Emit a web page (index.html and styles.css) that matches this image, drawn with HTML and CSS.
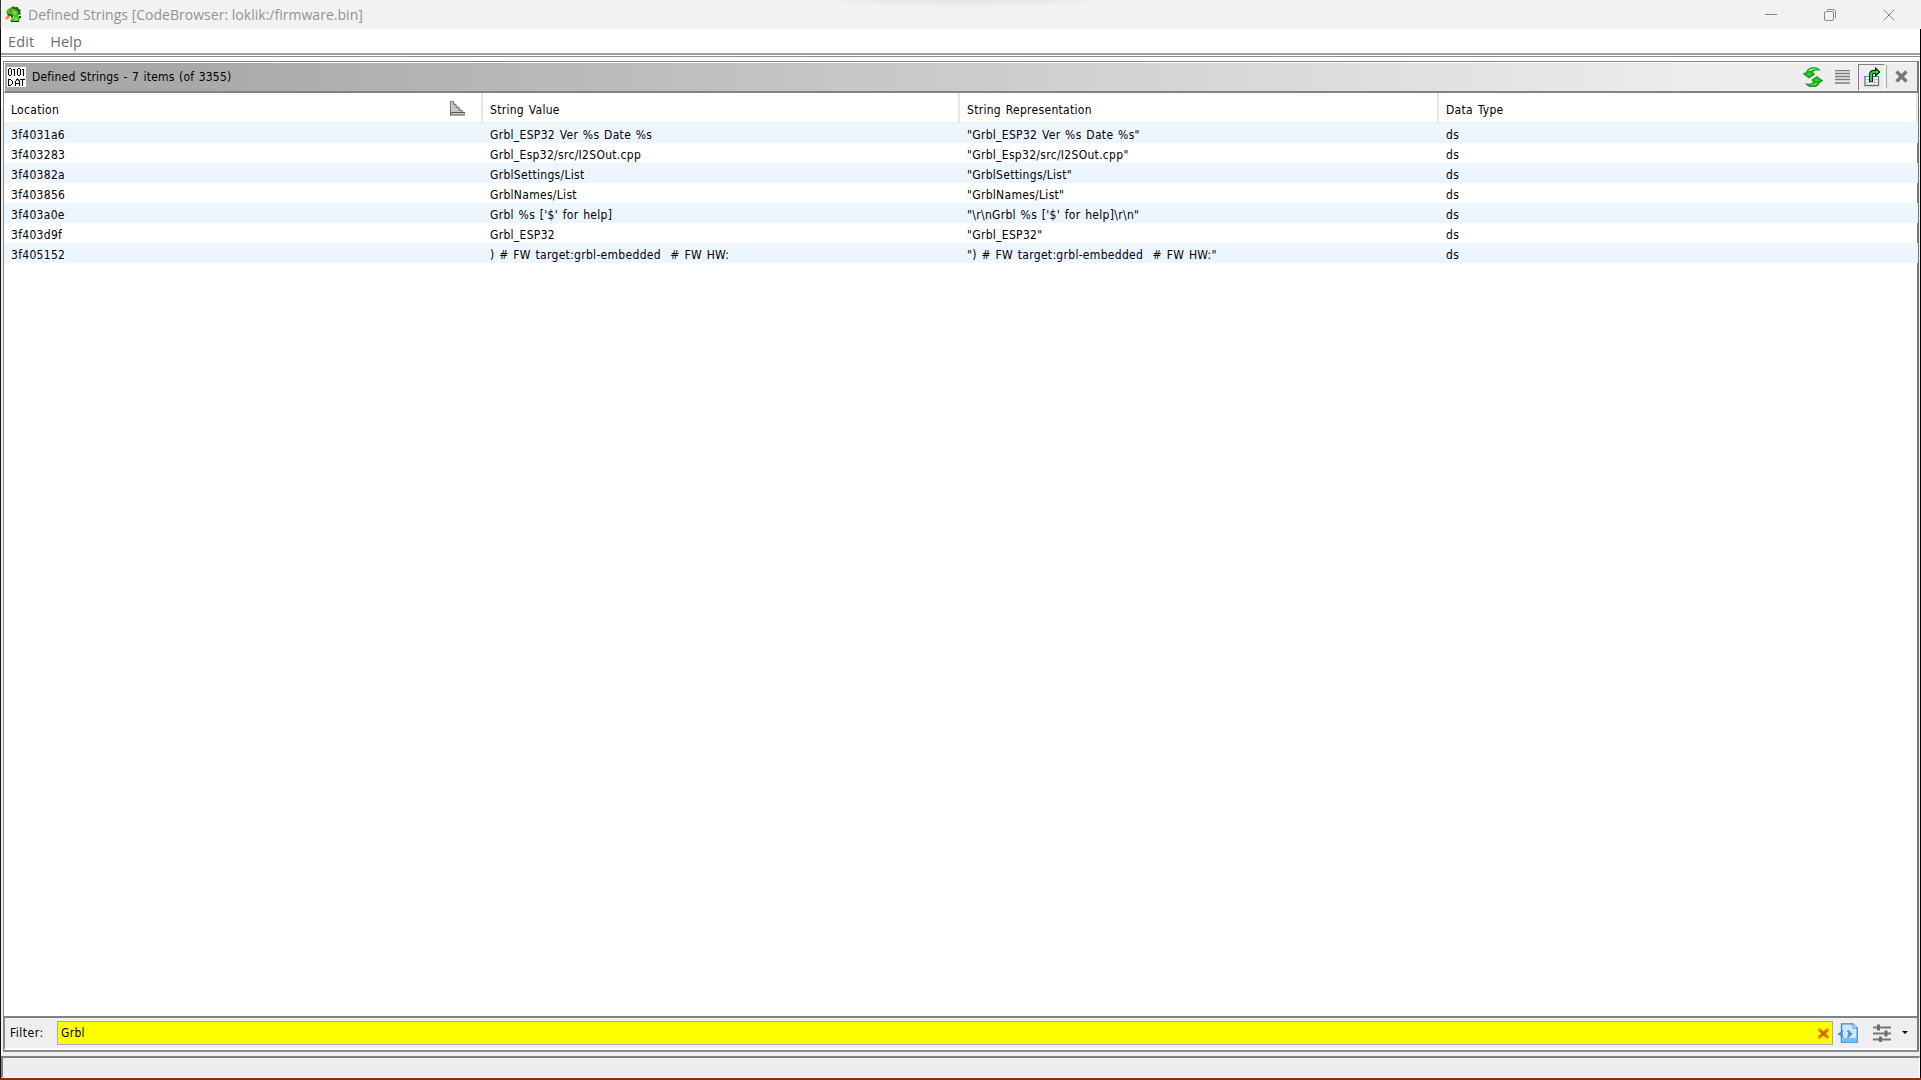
FILE: index.html
```html
<!DOCTYPE html>
<html lang="en">
<head>
  <meta charset="UTF-8">
  <meta name="viewport" content="width=device-width, initial-scale=1.0">
  <title>Defined Strings</title>
  <link rel="stylesheet" href="styles.css">
</head>
<body>
  <div class="window">
    <header class="titlebar">
      <svg class="app-icon" width="17" height="17" viewBox="0 0 17 17">
        <path d="M3 3L7 1L12 1L15 4L15 8L13 10L15 12L14 16L6 16L5 14L9 11L8 9L5 9L2 8L1 6Z" fill="#43bd22"/>
        <path d="M6 2L9 0L10 2L13 1L13 3L16 4L15 6L16 8L14 9L13 5L10 3Z" fill="#28551a"/>
        <path d="M6 4L10 5L12 7L10 9L7 6ZM9 12L12 11L13 14L9 15Z" fill="#72e143"/>
        <path d="M2 8H6V9H8V11L6 12L6 10H3ZM14 10H16V12H14ZM6 15H14V16H6Z" fill="#1d4312"/>
        <path d="M0 12L2 10H5L4 12L1 14Z" fill="#f08b32"/>
        <path d="M5 4H7V6H5ZM3 9H6V10H3Z" fill="#dc3b25"/>
      </svg>
      <span class="title">Defined Strings [CodeBrowser: loklik:/firmware.bin]</span>
      <div class="window-buttons">
        <svg width="14" height="14" viewBox="0 0 14 14"><path d="M1 6.5H13"/></svg>
        <svg width="14" height="14" viewBox="0 0 14 14"><rect x="1.5" y="3.5" width="9" height="9" rx="1.5"/><path d="M4 1.5H10Q12.5 1.5 12.5 4V10"/></svg>
        <svg width="14" height="14" viewBox="0 0 14 14"><path d="M1.5 1.5L12.5 12.5M12.5 1.5L1.5 12.5"/></svg>
      </div>
    </header>

    <div class="frame">
      <nav class="menubar">
        <span>Edit</span>
        <span>Help</span>
      </nav>

      <main class="panel">
        <div class="panel-header">
          <svg class="data-icon" width="19" height="20" viewBox="0 0 19 20">
            <rect width="19" height="20" fill="#fff"/>
            <path d="M1.500 2V8M4.500 2V8M2 1.500H4M2 8.500H4M6 2.500H7.500V9M10.500 2V8M13.500 2V8M11 1.500H13M11 8.500H13M15 2.500H16.500V9M1.500 12V19M2 12.500H4M2 18.500H4M5.500 14V17M4 13.500H5M4 17.500H5M8.500 19V14M9 13.500L10.500 12L12.500 14V19M9 16.500H12M13 12.500H18M15.500 12.500V19" fill="none" stroke="#000" stroke-width="1.100"/>
          </svg>
          <span class="panel-title">Defined Strings - 7 items (of 3355)</span>
          <div class="tools">
            <svg class="refresh" width="20" height="20" viewBox="0 0 20 20">
              <path d="M0 6.500L3 5Q5 0 11 0Q15 0 18 4Q14 2.500 11 4L10 5.500L12 7L6 11Z" fill="#1aa81c"/>
              <path d="M5 4Q8 0 15 2Q10 1.500 7.500 4Z" fill="#b4efb2"/>
              <path d="M3 6.500L7 5.500L9 7L6 9Z" fill="#2fd62d"/>
              <path d="M20 13.500L17 15Q15 20 9 20Q5 20 2 16Q6 17.500 9 16L10 14.500L8 13L14 9Z" fill="#1aa81c"/>
              <path d="M15 16Q12 19.500 5 18Q10 18.500 12.500 16Z" fill="#8be789"/>
              <path d="M17 13.500L13 14.500L11 13L14 11Z" fill="#2fd62d"/>
              <path d="M0 6.500L6 11L12 7M3 17Q6 20 9 20Q15 20 17 15L20 13.500" fill="none" stroke="#0b7d12" stroke-width=".8"/>
            </svg>
            <svg class="lines" width="15" height="15" viewBox="0 0 15 15"><path d="M0 .5H15M0 3.500H15M0 6.500H15M0 9.500H15M0 13H15" stroke="#7c7c7c" stroke-width="1.300"/></svg>
            <span class="pressed">
              <svg width="17" height="20" viewBox="0 0 17 20">
                <path d="M1 9.500V18.500H14.500V9.500" fill="#fff" stroke="#707070" stroke-width="1.300"/>
                <path d="M0 9.500H15" stroke="#3e8be0"/>
                <path d="M2 12.500H14M2 15.500H14M10.500 10V18" stroke="#c4c4c4"/>
                <path d="M7 15V8Q7 5 10 5H12" fill="none" stroke="#000" stroke-width="4"/>
                <path d="M11 0L16.500 5L11 10Z" fill="#000"/>
                <path d="M7 14.500V8Q7 5 10 5H13" fill="none" stroke="#15df21" stroke-width="2.200"/>
                <path d="M12 2.500L15 5L12 7.500Z" fill="#15df21"/>
              </svg>
            </span>
            <svg class="close" width="13" height="13" viewBox="0 0 13 13"><path d="M1.500 1.500L11.500 11.500M11.500 1.500L1.500 11.500" stroke="#777" stroke-width="3.400"/></svg>
          </div>
        </div>

        <div class="table-area">
          <table>
            <colgroup>
              <col class="col-location">
              <col class="col-value">
              <col class="col-representation">
              <col class="col-type">
            </colgroup>
            <thead>
              <tr>
                <th>
                  <div class="sorted">
                    <span>Location</span>
                    <svg width="16" height="15" viewBox="0 0 16 15">
                      <path d="M1 0V14H15V12L4 1Z" fill="#c8c8c8"/>
                      <path d="M.5 0V14.500M0 .5H3.500V3.500H6V6.500H9V9.500H12V11.500" fill="none" stroke="#777"/>
                      <path d="M1 11.500H15M0 14H15" stroke="#555"/>
                    </svg>
                  </div>
                </th>
                <th>String Value</th>
                <th>String Representation</th>
                <th>Data Type</th>
              </tr>
            </thead>
            <tbody>
              <tr><td>3f4031a6</td><td>Grbl_ESP32 Ver %s Date %s</td><td>"Grbl_ESP32 Ver %s Date %s"</td><td>ds</td></tr>
              <tr><td>3f403283</td><td>Grbl_Esp32/src/I2SOut.cpp</td><td>"Grbl_Esp32/src/I2SOut.cpp"</td><td>ds</td></tr>
              <tr><td>3f40382a</td><td>GrblSettings/List</td><td>"GrblSettings/List"</td><td>ds</td></tr>
              <tr><td>3f403856</td><td>GrblNames/List</td><td>"GrblNames/List"</td><td>ds</td></tr>
              <tr><td>3f403a0e</td><td>Grbl %s ['$' for help]</td><td>"\r\nGrbl %s ['$' for help]\r\n"</td><td>ds</td></tr>
              <tr><td>3f403d9f</td><td>Grbl_ESP32</td><td>"Grbl_ESP32"</td><td>ds</td></tr>
              <tr><td>3f405152</td><td>) # FW target:grbl-embedded&nbsp; # FW HW:</td><td>") # FW target:grbl-embedded&nbsp; # FW HW:"</td><td>ds</td></tr>
            </tbody>
          </table>
        </div>

        <div class="filter-bar">
          <label>Filter:</label>
          <div class="filter-input">
            <span>Grbl</span>
            <svg width="13" height="13" viewBox="0 0 13 13"><path d="M1.500 2L11.500 11M11.500 2L1.500 11" stroke="#e99a1c" stroke-width="3.500"/><path d="M3 3.500L10 9.500M10 3.500L3 9.500" stroke="#d9600f" stroke-width="2"/></svg>
          </div>
          <svg class="filter-doc" width="20" height="20" viewBox="0 0 20 20">
            <path d="M3.500 .8H15L19.200 5V19.200H3.500Z" fill="#cfe6fb" stroke="#3c83cc" stroke-width="1.300"/>
            <path d="M15 1V5H19" fill="#fff" stroke="#3c83cc"/>
            <path d="M5 16.500H18" stroke="#6fc0f2" stroke-width="3"/>
            <path d="M5 7.500L1.500 11L5 14.500M9.500 7.500L13 11L9.500 14.500" fill="none" stroke="#4a96de" stroke-width="2"/>
            <path d="M0 11H5M10 11H14" stroke="#4a96de" stroke-width="2"/>
          </svg>
          <svg class="sliders" width="18" height="18" viewBox="0 0 18 18"><path d="M0 3.500H18M0 9.500H18M0 15.500H18" stroke="#777" stroke-width="2"/><path d="M5.500 .5V6.500M13 6.500V12.500M7.500 12.500V18" stroke="#6c6c6c" stroke-width="3"/></svg>
          <svg class="arrow" width="6" height="3" viewBox="0 0 6 3"><path d="M0 0H6L3 3Z"/></svg>
        </div>
      </main>

      <footer class="statusbar"></footer>
    </div>
  </div>
</body>
</html>
```
FILE: styles.css
```css
* {
  box-sizing: border-box;
}

body {
  margin: 0;
  font-family: "DejaVu Sans Condensed", "DejaVu Sans", sans-serif;
  font-stretch: condensed;
  font-size: 12px;
  letter-spacing: 0.3px;
  color: #000;
}

svg {
  display: block;
  flex: none;
}

.window {
  width: 1921px;
  height: 1080px;
  display: flex;
  flex-direction: column;
  background: #fff;
  border-bottom: 2px solid #8c2d0b;
  overflow: hidden;
}

.titlebar {
  height: 29px;
  flex: none;
  display: flex;
  align-items: center;
  padding: 0 25px 0 4px;
  background: radial-gradient(ellipse 155px 7px at 962px 0, #e6e6e6 30%, #f2f2f2);
  border-left: 1px solid #333;
}

.title {
  margin-left: 6px;
  font-family: "Open Sans", sans-serif;
  font-stretch: normal;
  font-size: 14px;
  letter-spacing: 0.02px;
  color: #929292;
}

.window-buttons {
  display: flex;
  gap: 45px;
  margin-left: auto;
}

.window-buttons svg {
  fill: none;
  stroke: #858585;
}

.frame {
  flex: 1;
  display: flex;
  flex-direction: column;
  border-left: 1px solid #111;
  border-right: 1px solid #000;
  background: linear-gradient(#fff 80px, #efefef 80px);
}

.menubar {
  height: 28px;
  flex: none;
  display: flex;
  gap: 16px;
  padding: 0 7px;
  line-height: 25px;
  font-family: "Open Sans", sans-serif;
  font-stretch: normal;
  font-size: 14.5px;
  letter-spacing: 0.1px;
  color: #6d6d6d;
  background: linear-gradient(#fff 24px, #a0a0a0 24px, #a0a0a0 26px, #fff 26px, #fff 27px, #8c8c8c 27px);
}

.panel {
  height: 991px;
  flex: none;
  margin: 4px 1px 0 2px;
  display: flex;
  flex-direction: column;
  border: 1px solid #85858a;
  border-right: 2px solid #77777a;
  border-bottom: 2px solid #8c8c8c;
}

.panel-header {
  height: 31px;
  flex: none;
  display: flex;
  align-items: center;
  padding-left: 2px;
  background: linear-gradient(to right, #a8a8a8, #a9a9a9 10%, #eee 90%);
  border-top: 1px solid #fff;
  border-left: 1px solid #fff;
  border-bottom: 2px solid #808488;
}

.data-icon {
  margin-top: -1px;
}

.panel-title {
  margin-left: 6px;
  letter-spacing: 0.2px;
  word-spacing: 0.8px;
}

.tools {
  height: 28px;
  display: flex;
  align-items: center;
  margin-left: auto;
  padding-right: 9px;
}

.refresh {
  margin-top: -1px;
}

.lines {
  margin-left: 12px;
}

.pressed {
  width: 27px;
  height: 27px;
  display: flex;
  align-items: center;
  justify-content: center;
  padding-left: 2px;
  margin-left: 8px;
  border: 1px solid #808080;
  border-right-color: #fff;
  border-bottom-color: #fff;
}

.close {
  box-sizing: content-box;
  margin-top: -2px;
  margin-left: 1px;
  padding: 5px 0 5px 8px;
  border-left: 1px solid #a8a8a8;
}

.table-area {
  flex: 1;
  background: #fff;
}

table {
  width: 1914px;
  table-layout: fixed;
  border-collapse: separate;
  border-spacing: 0;
  word-spacing: 1px;
}

.col-location {
  width: 479px;
}

.col-value {
  width: 477px;
}

.col-representation {
  width: 479px;
}

th,
td {
  padding: 0 7px;
  text-align: left;
  font-weight: normal;
  white-space: nowrap;
}

th {
  height: 30px;
  padding-top: 4px;
  border-right: 2px solid #e6e6e6;
  border-bottom: 1px solid #ededed;
}

td {
  height: 20px;
  padding-top: 5px;
  line-height: 15px;
}

tbody tr:nth-child(odd) {
  background: #edf6ff;
}

.sorted {
  display: flex;
  align-items: center;
  justify-content: space-between;
  padding-right: 8px;
}

.sorted svg {
  margin-top: -2px;
}

.filter-bar {
  height: 34px;
  flex: none;
  display: flex;
  align-items: center;
  padding: 0 0 0 5px;
  background: #efefef;
  border-top: 2px solid #808088;
  border-left: 1px solid #888;
  border-bottom: 2px solid #fff;
}

.filter-bar label {
  width: 34px;
  letter-spacing: 0.5px;
}

.filter-input {
  width: 1776px;
  height: 24px;
  display: flex;
  align-items: center;
  justify-content: space-between;
  margin-left: 13px;
  padding: 0 2px 0 3px;
  background: #ff0;
  border: 1px solid #a9a9b4;
}

.filter-doc {
  margin-top: -1px;
  margin-left: 5px;
}

.sliders {
  margin-top: -1px;
  margin-left: 15px;
}

.arrow {
  margin-top: -2px;
  margin-left: 11px;
}

.statusbar {
  flex: 1;
  margin-top: 4px;
  background: #eee;
  border: 2px solid #808080;
  border-right: 1px solid #fff;
  border-bottom: 1px solid #fff;
}
```
